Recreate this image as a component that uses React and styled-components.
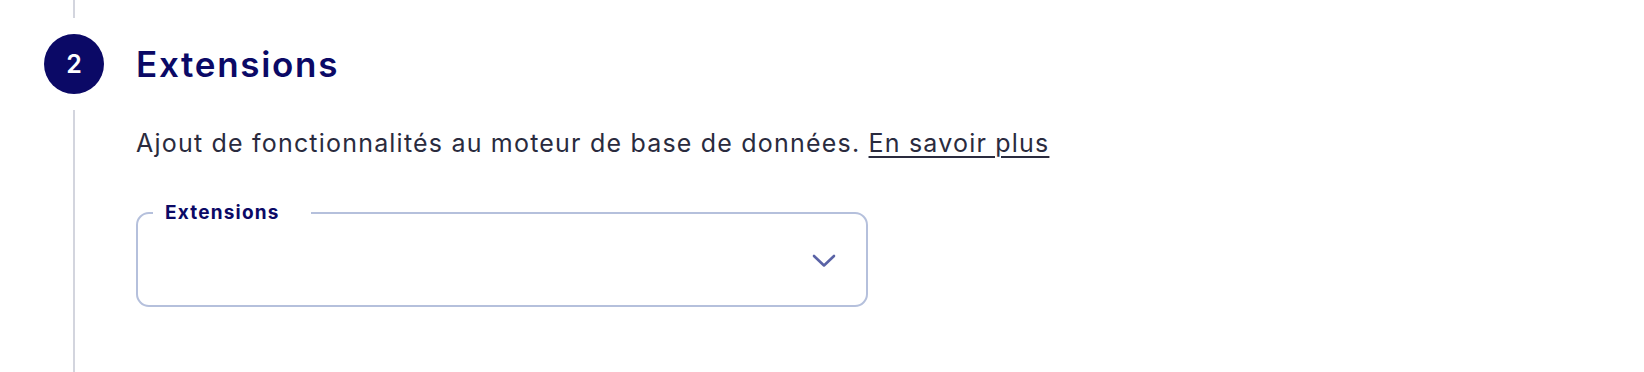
import React from "react";
import styled, { createGlobalStyle } from "styled-components";

const Global = createGlobalStyle`
  html, body { margin: 0; padding: 0; background: #ffffff; }
  body { font-family: Inter, "Noto Sans", sans-serif; }
`;

const Step = styled.section`
  display: flex;
  height: 372px;
  padding-left: 44px;
  box-sizing: border-box;
`;

const Rail = styled.div`
  width: 60px;
  display: flex;
  flex-direction: column;
  align-items: center;
  flex-shrink: 0;
`;

const RailLine = styled.div`
  width: 2px;
  background: #d3d5de;
  height: ${(p) => (p.$grow ? "auto" : p.$h + "px")};
  flex: ${(p) => (p.$grow ? "1" : "none")};
  margin: ${(p) => p.$m};
`;

const Badge = styled.div`
  width: 60px;
  height: 60px;
  border-radius: 50%;
  background: #0b0966;
  color: #ffffff;
  display: flex;
  align-items: center;
  justify-content: center;
  font-family: Inter, sans-serif;
  font-weight: 600;
  font-size: 25px;
`;

const Content = styled.div`
  margin-left: 32px;
  padding-top: 34px;
  display: flex;
  flex-direction: column;
  align-items: flex-start;
`;

const Title = styled.h2`
  margin: 0;
  height: 60px;
  display: flex;
  align-items: center;
  font-family: Inter, sans-serif;
  font-weight: 600;
  font-size: 35px;
  letter-spacing: 1.7px;
  color: #0b0966;
`;

const Description = styled.p`
  margin: 33px 0 0;
  font-family: Inter, sans-serif;
  font-size: 25px;
  line-height: 32px;
  letter-spacing: 1.2px;
  color: #2a2b3e;
`;

const Link = styled.a`
  color: #2a2b3e;
  text-decoration: underline;
  text-underline-offset: 4px;
  text-decoration-thickness: 1.5px;
`;

const Field = styled.fieldset`
  margin: 44px 0 0;
  width: 732px;
  box-sizing: border-box;
  border: 2px solid #b5c0dc;
  border-radius: 13px;
  padding: 0 30px 10px 15px;
`;

const Legend = styled.legend`
  padding: 0 31px 0 12px;
  font-family: Inter, sans-serif;
  font-weight: 700;
  font-size: 19px;
  line-height: 20px;
  letter-spacing: 1.2px;
  color: #0b0966;
`;

const Control = styled.div`
  height: 72px;
  padding-top: 3px;
  box-sizing: border-box;
  display: flex;
  align-items: center;
  justify-content: flex-end;
`;

const Chevron = styled.svg`
  width: 24px;
  height: 14px;
`;

export default function App() {
  return (
    <>
      <Global />
      <Step>
        <Rail>
          <RailLine $h={18} $m="0 0 16px" />
          <Badge>2</Badge>
          <RailLine $grow $m="16px 0 0" />
        </Rail>
        <Content>
          <Title>Extensions</Title>
          <Description>
            Ajout de fonctionnalités au moteur de base de données.{" "}
            <Link href="#">En savoir plus</Link>
          </Description>
          <Field>
            <Legend>Extensions</Legend>
            <Control>
              <Chevron viewBox="0 0 24 14" fill="none">
                <path
                  d="M2 2 L12 11.5 L22 2"
                  stroke="#5a63a6"
                  strokeWidth="2.6"
                  strokeLinecap="round"
                  strokeLinejoin="round"
                />
              </Chevron>
            </Control>
          </Field>
        </Content>
      </Step>
    </>
  );
}
